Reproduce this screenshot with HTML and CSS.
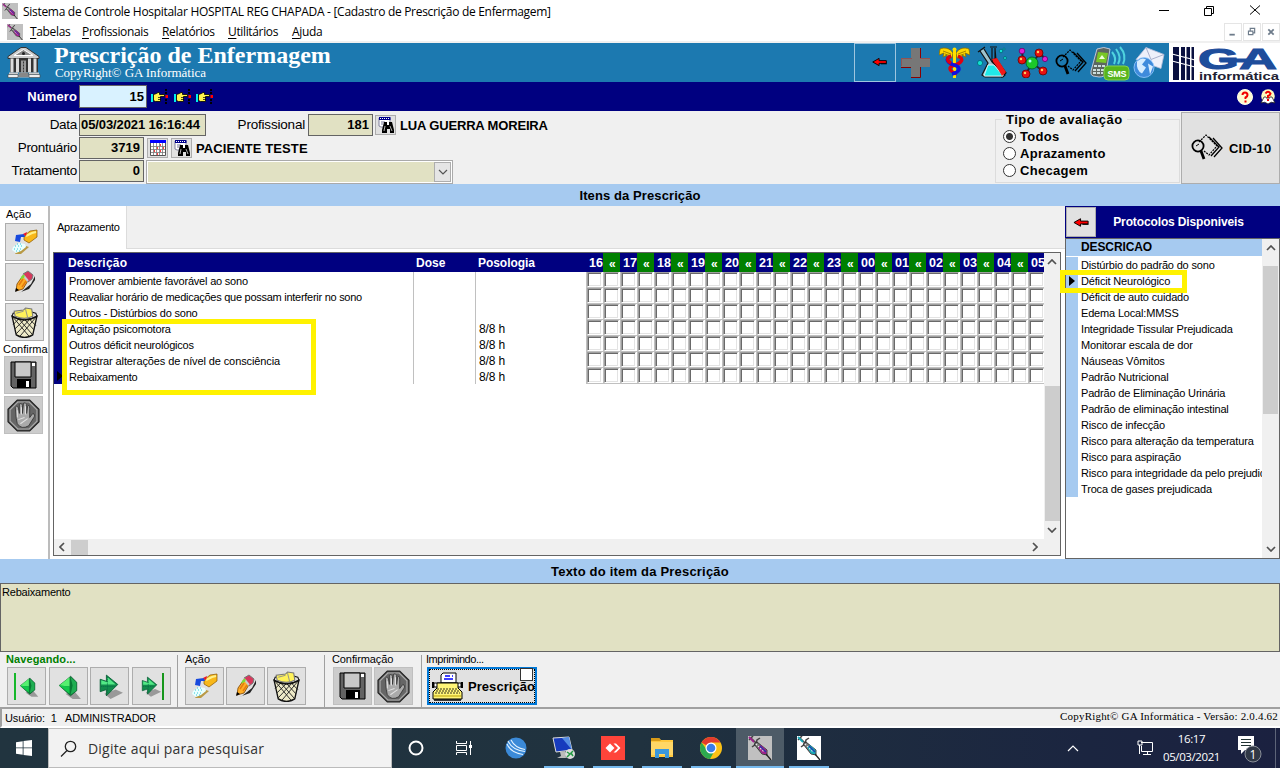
FILE: index.html
```html
<!DOCTYPE html>
<html lang="pt-BR">
<head>
<meta charset="utf-8">
<title>Cadastro de Prescrição de Enfermagem</title>
<link rel="stylesheet" href="styles.css">
</head>
<body>
<svg class="sprite" width="0" height="0">
  <symbol id="syringe" viewBox="0 0 24 24">
    <path d="M1 4L5 0M3 2L9 8M4 11L8 8L9 4L12 2" stroke="#444" stroke-width="1.5" fill="none"/>
    <path d="M1 1L6 6" stroke="currentColor" stroke-width="1.8"/>
    <path d="M6 8L9 6L19 14L19 19L14 18Z" fill="#777" stroke="#222" stroke-width=".8"/>
    <path d="M10 11L13 9L18.500 14L18.500 18.500L14 17.500Z" fill="currentColor"/>
    <path d="M8 8L16 16" stroke="#e8e8e8" stroke-width="1.1" stroke-dasharray="1.500 1.500"/>
    <path d="M12 10L18 16" stroke="#2038b0" stroke-width="1.200"/>
    <path d="M18 18L23 24" stroke="#222" stroke-width="1.300"/>
  </symbol>
  <symbol id="bank" viewBox="0 0 34 33">
    <path d="M1 11L14 2H19L32 11V13H1Z" fill="#ccc" stroke="#333" stroke-width="1"/>
    <path d="M7 10L16.500 4L26 10Z" fill="#888" stroke="#fff"/>
    <circle cx="16.500" cy="8" r="1.500" fill="#222"/>
    <path d="M3 13H31V27H3Z" fill="#333"/>
    <path d="M5 13V27M10.500 13V27M22.500 13V27M28 13V27" stroke="#ddd" stroke-width="3"/>
    <path d="M14 15H19V27H14Z" fill="#999"/><path d="M16.500 16V27" stroke="#333" stroke-dasharray="2 1"/>
    <path d="M2 27H11V29H2ZM22 27H32V29H22Z" fill="#ccc"/>
    <path d="M1 29H11V32H1ZM22 29H33V32H22Z" fill="#eee" stroke="#444" stroke-width=".6"/>
    <path d="M12 27H21L22 32H11Z" fill="#bbb"/><path d="M12 28.500H22M11 30.500H22" stroke="#555"/>
  </symbol>
  <symbol id="arrow-left" viewBox="0 0 18 11">
    <path d="M1 5.500L8 1.500V4H16V7H8V9.500Z" fill="#f00" stroke="#000" stroke-width="1"/>
    <path d="M10 7.500H16.500" stroke="#000"/>
  </symbol>
  <symbol id="cross" viewBox="0 0 31 31">
    <path d="M11 1H20V11H30V20H20V30H11V20H1V11H11Z" fill="#777"/>
    <path d="M20.500 1V11M11 30.500H20.500V20M1 20.500H11" stroke="#8b0000" fill="none"/>
    <path d="M12 11.500H1.500V19M30 11.500H20" stroke="#944" fill="none" stroke-width=".7"/>
  </symbol>
  <symbol id="caduceus" viewBox="0 0 31 32">
    <path d="M14 6C11 1 5 0 1 2L0 8L5 6L4 10L8 8L8 11H13ZM17 6C20 1 26 0 30 2L31 8L26 6L27 10L23 8L23 11H18Z" fill="#ffd800" stroke="#8a6b00" stroke-width=".8"/>
    <path d="M4 4L12 7M6 7L12 9M27 4L19 7M25 7L19 9" stroke="#8a6b00" stroke-width=".8"/>
    <path d="M15.500 2V31" stroke="#ffe000" stroke-width="3"/>
    <path d="M19 9C26 12 22 16 16 18C8 20 10 24 18 27" stroke="#e00010" stroke-width="3.400" fill="none"/>
    <path d="M12 9C5 12 9 16 15 18C23 20 21 25 13 27" stroke="#1010e0" stroke-width="3.400" fill="none"/>
    <path d="M12 9C7 11 8 14 12 16" stroke="#e00010" stroke-width="3.400" fill="none"/>
    <circle cx="15.500" cy="2.500" r="2" fill="#ffe000"/>
  </symbol>
  <symbol id="flasks" viewBox="0 0 31 33">
    <path d="M13 1H20M15 2V14M18 2V12L29 27L25 31L20 28Z" fill="#b9d3dc" stroke="#111" stroke-width="1.200"/>
    <path d="M15 14L19 12L29 27L25 31L20 28Z" fill="#f01818" stroke="#111"/>
    <path d="M1 6L8 1M3 5L11 17L5 29L8 31H26L28 29L15 16L7 3" fill="#9fc3cc" stroke="#111" stroke-width="1.200"/>
    <path d="M11 19H17L26 30H7Z" fill="#20e8e8" stroke="#fff" stroke-width=".7"/>
    <path d="M15 13L20 12L29 26L25 30Z" fill="#f01818"/>
    <g fill="#10e0d0" stroke="#067" stroke-width=".8"><circle cx="3" cy="17" r="2.600"/><circle cx="24" cy="5" r="1.800"/><circle cx="28" cy="12" r="1.500"/><circle cx="27" cy="3" r="1"/></g>
  </symbol>
  <symbol id="molecule" viewBox="0 0 31 30">
    <path d="M5 3L6 12L15 15L23 5L28 11M15 15L9 26M15 15L26 23" fill="none" stroke="#223" stroke-width="2"/>
    <circle cx="15" cy="15" r="6" fill="#1bc82a" stroke="#063"/><circle cx="13" cy="13" r="1.500" fill="#aff"/>
    <g fill="#e81010" stroke="#600" stroke-width=".8"><circle cx="22" cy="5" r="4"/><circle cx="5" cy="12" r="4"/><circle cx="9" cy="26" r="4"/><circle cx="26" cy="23" r="4"/></g>
    <g fill="#e020d0" stroke="#606" stroke-width=".8"><circle cx="5" cy="3" r="2.800"/><circle cx="28" cy="11" r="2.600"/></g>
    <g fill="#ffd060"><circle cx="21" cy="4" r="1.200"/><circle cx="4" cy="11" r="1.200"/><circle cx="8" cy="25" r="1.200"/><circle cx="25" cy="22" r="1.200"/></g>
  </symbol>
  <symbol id="search-docs" viewBox="0 0 32 28">
    <path d="M8 8L15 1L26 12L18 21L13 17" fill="none" stroke="#000" stroke-width="1.200" stroke-dasharray="2 1"/>
    <path d="M18 3L28 13L20 22M22 4L31 14L23 23" fill="none" stroke="#000" stroke-width="1.300"/>
    <circle cx="7" cy="12" r="5.600" fill="none" stroke="#000" stroke-width="1.800"/>
    <path d="M10 17L13 25" stroke="#000" stroke-width="2.800"/><path d="M5 12L8 10" stroke="#000"/>
  </symbol>
  <symbol id="sms" viewBox="0 0 40 36">
    <path d="M7 4Q14 1 20 4L16 28Q15 32 9 32L3 31Q0 30 1 26Z" fill="#5c6661" stroke="#dde" stroke-width=".8"/>
    <path d="M8 7L18 8L16 18L6 17Z" fill="#79c727"/><path d="M9 14L12 10L15 14Z" fill="#efd"/>
    <path d="M4 21H15M3 25H14M3 28H13" stroke="#cdd" stroke-width="1.800" stroke-dasharray="3 1"/>
    <path d="M22 7Q27 13 24 19M26 4Q32 12 28 19M30 2Q37 10 33 19" fill="none" stroke="#4fd3de" stroke-width="2"/>
    <rect x="14" y="21" width="25" height="14" rx="4" fill="#58b51d" stroke="#83d24c"/>
    <text x="17.500" y="32" font-family="Liberation Sans" font-size="9" font-weight="bold" fill="#fff" textLength="19">SMS</text>
  </symbol>
  <symbol id="mail-globe" viewBox="0 0 32 32">
    <path d="M13 1L31 8L28 22L3 13Z" fill="#eef0fa" stroke="#b9bfdc" stroke-width=".8"/>
    <path d="M13 1L18 13L31 8" fill="none" stroke="#aab0cc"/>
    <circle cx="11" cy="21" r="10" fill="#3f8bdc" stroke="#9cf" stroke-width=".8"/>
    <path d="M4 15Q9 10 13 13L9 18L13 21L9 27Q3 24 4 15M15 17L20 20L17 28Z" fill="#d5ecff"/>
  </symbol>
  <symbol id="hand" viewBox="0 0 18 15">
    <path d="M0 5H2V13H0Z" fill="#0ee"/>
    <path d="M2.500 5.500L5.500 4.500L7 3.500H8.500V5.500H13.500V7.500H9.500V12.500H4.500L2.500 11.500Z" fill="#fff34d" stroke="#000" stroke-width=".8"/>
    <path d="M7 8.500H10M7 10.500H10" stroke="#000" stroke-width=".7"/>
    <path d="M14 0H16V2H14ZM14 3H16V5H14ZM14 10H16V12H14ZM14 13H16V15H14Z" fill="#000"/><path d="M14.500 6H17V9H14.500Z" fill="#f00"/>
  </symbol>
  <symbol id="binoculars" viewBox="0 0 16 16">
    <path d="M1 1H12V10H3L1 9Z" fill="#fff" stroke="#668" stroke-width=".8"/><path d="M1 0H12.500V3H1Z" fill="#00008c"/><path d="M2 1.500H12" stroke="#fff" stroke-dasharray="1 1"/>
    <path d="M3 5H7M3 7H5" stroke="#779"/>
    <path d="M6 5H9V8H11V5H14L16 13V16H12V12H9V16H4V13Z" fill="#000"/><path d="M7 9L6 14M12 9L14 14" stroke="#fff" stroke-width=".7"/>
  </symbol>
  <symbol id="calendar" viewBox="0 0 16 16">
    <path d="M.5.5H15.500V15.500H.5Z" fill="#fff" stroke="#555"/><path d="M0 0H16V3H0Z" fill="#00f"/>
    <path d="M3.500 3V15M6.500 3V15M9.500 3V15M12.500 3V15M1 6.500H15M1 9.500H15M1 12.500H15" stroke="#777" stroke-width=".8"/>
    <path d="M7 8H8M10 5H11M13 8H14M4 11H5M10 11H11M7 14H8" stroke="#f00" stroke-width="1.500"/>
  </symbol>
  <symbol id="help" viewBox="0 0 16 16"><circle cx="8" cy="8" r="7.500" fill="#fffbd0" stroke="#ffe" /><path d="M5.500 6Q5.500 3.500 8 3.500T10.500 6Q10.500 7.500 8.500 8.500V10M8.500 11.500V13.500" stroke="#f00000" stroke-width="2" fill="none"/></symbol>
  <symbol id="help-book" viewBox="0 0 16 16"><circle cx="8" cy="7" r="6.800" fill="#fffbc0"/><path d="M1 14L4 8H6L8 11L10 8H12L15 14Q11 12 8 15Q5 12 1 14Z" fill="#fff" stroke="#222" stroke-width=".8"/><path d="M5.500 4.500Q8 1 10.500 4.500Q10 6.500 8 7V9M8 10V12" stroke="#f00000" stroke-width="2" fill="none"/></symbol>
  <symbol id="pour" viewBox="0 0 26 26">
    <path d="M5 22L14 17L17 18L9 25H3Z" fill="#b99a46"/>
    <path d="M12 7L18 2L25 1V8L17 14L12 11Z" fill="#f8b719" stroke="#8a5600" stroke-width=".7"/><path d="M14 7L20 4L24 3" stroke="#fff08a" stroke-width="2" fill="none"/>
    <path d="M3 12L4 6L12 5L13 8L9 8L8 13Z" fill="#1749dd"/><path d="M11 5L15 3L14 7Z" fill="#e12"/>
    <path d="M1 18L7 14L13 15L14 18L9 22L4 24L0 21Z" fill="#e9ffff"/><path d="M3 17H12M2 20H11M5 15H11M4 22H8" stroke="#36c6d6" stroke-dasharray="1 2"/>
  </symbol>
  <symbol id="pencil" viewBox="0 0 22 24">
    <path d="M4 23L15 19L21 10V6L17 14L7 22Z" fill="#222"/>
    <path d="M3 14L10 4L15 9L9 19L2 21Z" fill="#ffae25" stroke="#7b4200" stroke-width=".8"/>
    <path d="M9 4L14 1L19 5L18 9L14 12Z" fill="#d7385c" stroke="#777"/><path d="M9 5L14 11" stroke="#ccc" stroke-width="2"/>
    <path d="M10 5L9 8M7 9L9 6" stroke="#7edb35" stroke-width="2"/><path d="M5 15L9 9M8 17L12 11" stroke="#e67a10" stroke-width="1.500"/><path d="M1 22L2 18L5 20Z" fill="#000"/>
  </symbol>
  <symbol id="trash" viewBox="0 0 26 30">
    <path d="M1 8L5 27Q13 32 21 27L25 8Z" fill="#eeeac8"/>
    <path d="M2 10L18 29M7 11L21 27M13 12L22 22M18 12L24 18M24 10L8 29M19 11L5 26M13 12L4 21M8 11L2 17" stroke="#222" stroke-width=".9"/>
    <path d="M1 9Q13 16 25 9L24 6Q13 2 2 6Z" fill="#ddd" stroke="#111"/>
    <path d="M4 9L3 4L12 3L14 1L20 2L21 9Q13 13 4 9Z" fill="#fff25a" stroke="#777"/><path d="M5 6L12 4M14 2L16 10" stroke="#998" />
    <path d="M1 9Q13 16 25 9L21 27Q13 32 5 27Z" fill="none" stroke="#111" stroke-width="1.300"/>
  </symbol>
  <symbol id="floppy" viewBox="0 0 27 28">
    <path d="M1 1H26V27H3L1 25Z" fill="#636363" stroke="#000"/><path d="M5 1H21V16H5Z" fill="#c8c8c8" stroke="#000"/><path d="M22 2H25V5H22Z" fill="#fff"/><path d="M7 18H21V27H7Z" fill="#000"/><path d="M16 20H19V26H16Z" fill="#fff"/>
  </symbol>
  <symbol id="stop" viewBox="0 0 32 32">
    <path d="M10 1H22L31 10V22L22 31H10L1 22V10Z" fill="#666" stroke="#222" stroke-width="1.200"/><path d="M10.500 3H21.500L29 10.500V21.500L21.500 29H10.500L3 21.500V10.500Z" fill="none" stroke="#aaa" stroke-width="1"/>
    <path d="M9 19L8 8Q9 6 11 8L12 14L12 5Q14 3 15 6V14L16 4Q18 3 19 5V14L20 7Q22 5 22 9V18L25 14Q28 15 26 18L21 26Q14 30 10 24Z" fill="#aaa" stroke="#333" stroke-width=".8"/>
    <path d="M11 20L17 18M13 24L20 19M10 11V18M14 8V15M18 7V15" stroke="#e2e2e2" stroke-width="1"/>
  </symbol>
  <symbol id="nav-prev" viewBox="0 0 28 26">
    <path d="M11 20L18 25H26L20 18Z" fill="#999"/><path d="M5 12L14 5L16 3L22 9V17L16 22Z" fill="#087a35" stroke="#034d24" stroke-width=".6"/><path d="M5 12L15 4V13Z" fill="#55f070"/><path d="M5 12L15 13V20Z" fill="#12c84b"/><path d="M16 4L21.500 9V17L16 21L18 12Z" fill="#1fae52"/>
  </symbol>
  <symbol id="nav-next" viewBox="0 0 28 26">
    <path d="M9 20L15 25L27 19L20 16Z" fill="#999"/><path d="M5 6L11 8V2L22 11L11 22V16L5 18Z" fill="#128b4c" stroke="#045d32" stroke-width=".8"/><path d="M6 7L12 9V4L20 11H6Z" fill="#52e986"/><path d="M6 13H19M12 4V19" stroke="#057047" fill="none" stroke-width="1" stroke-dasharray="1 1"/>
  </symbol>
  <symbol id="typewriter" viewBox="0 0 33 29">
    <path d="M10 11V3L12 1H25V11Z" fill="#fff" stroke="#000"/><path d="M14 4H19M13 7H22M21 4H22" stroke="#00f" stroke-width="1.300"/>
    <path d="M3 11H30V15H3Z" fill="#fff" stroke="#000"/><path d="M2 10V16M31 10V16" stroke="#000" stroke-width="2"/>
    <path d="M6 11H27V16L31 20V27H2V20L6 16Z" fill="#fff477" stroke="#000"/><path d="M6 17H27M5 19H28M4 21H29" stroke="#000" stroke-width=".8" stroke-dasharray="2 1"/><path d="M3 24H30" stroke="#b79e00"/><path d="M3 28H30" stroke="#000" stroke-width="1.500"/>
  </symbol>
</svg>

<div class="app">
  <header class="titlebar">
    <svg class="app-icon pink"><use href="#syringe"/></svg>
    <span class="window-title">Sistema de Controle Hospitalar HOSPITAL REG CHAPADA - [Cadastro de Prescrição de Enfermagem]</span>
    <svg class="window-controls" viewBox="0 0 110 22"><path d="M0 10.500H10M45.500 8.500H52.500V15.500H45.500ZM47.500 8V6.500H54.500V13.500H53M91 5.500L101 14.500M101 5.500L91 14.500" fill="none" stroke="#000"/></svg>
  </header>
  <nav class="menubar">
    <svg class="app-icon pink"><use href="#syringe"/></svg>
    <span class="m1"><u>T</u>abelas</span><span class="m2"><u>P</u>rofissionais</span><span class="m3"><u>R</u>elatórios</span><span class="m4"><u>U</u>tilitários</span><span class="m5"><u>A</u>juda</span>
    <div class="mdi">
      <svg viewBox="0 0 18 18"><path d="M5 12H11" stroke="#6d7b8a" stroke-width="2"/></svg>
      <svg viewBox="0 0 18 18"><path d="M5 8H10V12H5ZM7 8V5H12V10H10" stroke="#6d7b8a" fill="none" stroke-width="1.300"/></svg>
      <svg viewBox="0 0 18 18"><path d="M6 6L12 12M12 6L6 12" stroke="#6d7b8a" stroke-width="2"/></svg>
    </div>
  </nav>
  <section class="banner">
    <svg class="bank"><use href="#bank"/></svg>
    <div class="brand"><h1>Prescrição de Enfermagem</h1><p>CopyRight© GA Informática</p></div>
    <div class="modules">
      <div class="back"><svg width="18" height="10"><use href="#arrow-left"/></svg></div>
      <svg class="i-cross"><use href="#cross"/></svg><svg class="i-cad"><use href="#caduceus"/></svg><svg class="i-flask"><use href="#flasks"/></svg><svg class="i-mol"><use href="#molecule"/></svg><svg class="i-docs"><use href="#search-docs"/></svg><svg class="i-sms"><use href="#sms"/></svg><svg class="i-mail"><use href="#mail-globe"/></svg>
    </div>
    <svg class="logo" viewBox="0 0 111 39">
      <rect width="111" height="39" fill="#fff"/>
      <path d="M4 4H10V37H4ZM12 4H16V37H12ZM17.500 4H21V37H17.500ZM22.500 4H25V37H22.500Z" fill="#0a1040"/><path d="M3 11L26 17M3 18L26 24" stroke="#fff" stroke-width="1.200"/>
      <text x="29" y="26" class="logo-ga" textLength="79" lengthAdjust="spacingAndGlyphs">GA</text><path d="M53 15.500H84L81 19.500H51Z" fill="#1e4d9b"/>
      <text x="30" y="37" class="logo-info" textLength="80" lengthAdjust="spacingAndGlyphs">informática</text>
    </svg>
  </section>
  <section class="number-bar">
    <label>Número</label><div class="number">15</div>
    <svg class="hand"><use href="#hand"/></svg><svg class="hand"><use href="#hand"/></svg><svg class="hand"><use href="#hand"/></svg>
    <div class="helps"><svg><use href="#help"/></svg><svg><use href="#help-book"/></svg></div>
  </section>

  <section class="form">
    <div class="fields">
      <div class="row"><label>Data</label><div class="field date">05/03/2021 16:16:44</div><label class="prof">Profissional</label><div class="field num">181</div><div class="mini first"><svg><use href="#binoculars"/></svg></div><b class="who">LUA GUERRA MOREIRA</b></div>
      <div class="row"><label>Prontuário</label><div class="field num">3719</div><div class="mini cal"><svg><use href="#calendar"/></svg></div><div class="mini"><svg><use href="#binoculars"/></svg></div><b class="patient">PACIENTE TESTE</b></div>
      <div class="row"><label>Tratamento</label><div class="field num">0</div><div class="combo"><div class="drop"><svg viewBox="0 0 10 6"><path d="M1 1L5 5L9 1" fill="none" stroke="#555" stroke-width="1.200"/></svg></div></div></div>
    </div>
    <fieldset><legend>Tipo de avaliação</legend>
      <div><i class="radio on"></i>Todos</div><div><i class="radio"></i>Aprazamento</div><div><i class="radio"></i>Checagem</div>
    </fieldset>
    <div class="cid"><svg><use href="#search-docs"/></svg><b>CID-10</b></div>
  </section>
  <div class="strip">Itens da Prescrição</div>

  <main>
    <aside>
      <span class="side-label">Ação</span>
      <div class="btn"><svg class="pour"><use href="#pour"/></svg></div><div class="btn"><svg class="pencil"><use href="#pencil"/></svg></div><div class="btn"><svg class="trash"><use href="#trash"/></svg></div>
      <span class="side-label conf">Confirma</span>
      <div class="btn off"><svg class="floppy"><use href="#floppy"/></svg></div><div class="btn off"><svg class="stop"><use href="#stop"/></svg></div>
    </aside>
    <section class="sheet">
      <div class="tabs"><div class="tab">Aprazamento</div></div>
      <div class="grid-wrap">
        <div class="grid">
          <div class="thead"><span class="h-ind"></span><span class="h-desc">Descrição</span><span class="h-dose">Dose</span><span class="h-pos">Posologia</span><div class="hours" id="hours"></div></div>
          <div id="rows"></div>
        </div>
        <div class="vbar"><svg viewBox="0 0 10 6"><path d="M1 5L5 1L9 5"/></svg><i class="vthumb"></i><svg class="down" viewBox="0 0 10 6"><path d="M1 1L5 5L9 1"/></svg></div>
        <div class="hbar"><svg viewBox="0 0 6 10"><path d="M5 1L1 5L5 9"/></svg><i></i><svg class="right" viewBox="0 0 6 10"><path d="M1 1L5 5L1 9"/></svg></div>
        <div class="mark rows-mark"></div>
      </div>
    </section>
    <section class="protocols">
      <header><div class="pback"><svg width="17" height="11"><use href="#arrow-left"/></svg></div><b>Protocolos Disponiveis</b></header>
      <div class="plist">
        <div class="pcontent"><div class="phead">DESCRICAO</div><ul id="protocols"></ul></div>
        <div class="pbar"><svg viewBox="0 0 10 6"><path d="M1 5L5 1L9 5"/></svg><i></i><svg class="down" viewBox="0 0 10 6"><path d="M1 1L5 5L9 1"/></svg></div>
      </div>
      <div class="mark protocol-mark"></div>
    </section>
  </main>
  <div class="strip second">Texto do item da Prescrição</div>
  <div class="memo">Rebaixamento</div>

  <section class="toolbar">
    <div class="group g-nav"><span class="green">Navegando...</span><div class="buttons">
      <div class="btn"><svg class="nav first-nav"><use href="#nav-prev"/></svg></div><div class="btn"><svg class="nav"><use href="#nav-prev"/></svg></div><div class="btn"><svg class="nav"><use href="#nav-next"/></svg></div><div class="btn"><svg class="nav last-nav"><use href="#nav-next"/></svg></div></div></div>
    <div class="group g-act"><span>Ação</span><div class="buttons"><div class="btn"><svg class="pour"><use href="#pour"/></svg></div><div class="btn"><svg class="pencil"><use href="#pencil"/></svg></div><div class="btn"><svg class="trash"><use href="#trash"/></svg></div></div></div>
    <div class="group g-conf"><span>Confirmação</span><div class="buttons"><div class="btn off"><svg class="floppy"><use href="#floppy"/></svg></div><div class="btn off"><svg class="stop"><use href="#stop"/></svg></div></div></div>
    <div class="group g-print"><span>Imprimindo...</span><div class="print"><svg><use href="#typewriter"/></svg><b>Prescrição</b><i></i></div></div>
  </section>
  <footer class="status"><span class="user">Usuário:&nbsp; 1 &nbsp; ADMINISTRADOR</span><span class="version">CopyRight© GA Informática - Versão: 2.0.4.62</span></footer>

  <footer class="taskbar">
    <div class="start"><svg viewBox="0 0 16 16"><path d="M0 2.200L6.700 1.200V7.500H0ZM7.500 1.100L16 0V7.500H7.500ZM0 8.300H6.700V14.700L0 13.800ZM7.500 8.300H16V16L7.500 14.900Z" fill="#fff"/></svg></div>
    <div class="search"><svg viewBox="0 0 17 17"><circle cx="10.500" cy="6.500" r="5.200" fill="none" stroke="#222" stroke-width="1.300"/><path d="M7 10.500L1 16.500" stroke="#222" stroke-width="1.300"/></svg>Digite aqui para pesquisar</div>
    <div class="task plain"><svg width="18" height="18"><circle cx="9" cy="9" r="6.500" fill="none" stroke="#fff" stroke-width="2"/></svg></div>
    <div class="task plain"><svg width="18" height="16"><path d="M1.500 1V3.500H11.500V1M1.500 15V12.500H11.500V15M1.500 5.500H11.500V10.500H1.500ZM15.500 1V15" fill="none" stroke="#fff"/><path d="M14 5H17V8H14Z" fill="#fff"/></svg></div>
    <div class="task wide"><svg width="22" height="22"><circle cx="11" cy="11" r="10.500" fill="#3b8ad8"/><path d="M3 4Q7 13 20 14.500M6 3Q10 11 20 12.500M2 7Q6 16 18 17.500" stroke="#e4f3ff" stroke-width="1.100" fill="none"/></svg></div>
    <div class="task run"><svg width="24" height="24"><path d="M1 2L17 1L20 14L4 16Z" fill="#173bbd" stroke="#ddd"/><path d="M10 2L17 1L20 14Z" fill="#548de3"/><path d="M8 16L9 20L5 22H14L13 15" fill="#bbb"/><circle cx="18" cy="18" r="5" fill="#ddd"/><path d="M15 16L18 18L15 21M21 15L19 17L21 20" stroke="#219a42" fill="none" stroke-width="1.500"/></svg></div>
    <div class="task run"><svg width="24" height="24"><path d="M0 0H24V24H0Z" fill="#ff443a"/><path d="M9 7.500L13.500 12L9 16.500L4.500 12Z" fill="#fff"/><path d="M12.500 7.500L17 12L12.500 16.500L15 16.500L19.500 12L15 7.500Z" fill="#fff"/></svg></div>
    <div class="task run"><svg width="22" height="22"><path d="M0 1H8L10 3H22V20H0Z" fill="#ffc83d"/><path d="M0 1H8L10 4H0Z" fill="#d89b18"/><path d="M0 5H22V18H0Z" fill="#ffd766"/><path d="M4 21V12H18V21H14V17H8V21Z" fill="#3b98dc"/></svg></div>
    <div class="task run"><svg width="24" height="24" viewBox="0 0 24 24"><circle cx="12" cy="12" r="11" fill="#fbc116"/><path d="M12 12L2.500 6.500A11 11 0 0 1 21.500 6.500H12Z" fill="#e33b2e"/><path d="M2.500 6.500A11 11 0 0 0 11 23L16 14H8Z" fill="#2da94f"/><circle cx="12" cy="12" r="5.500" fill="#fff"/><circle cx="12" cy="12" r="4.300" fill="#3b7de9"/></svg></div>
    <div class="task active"><svg class="tsyr pink"><use href="#syringe"/></svg></div>
    <div class="task run tlast"><svg class="tsyr blue"><use href="#syringe"/></svg></div>
    <div class="tray"><svg class="caret" viewBox="0 0 12 8"><path d="M1 7L6 2L11 7" fill="none" stroke="#fff" stroke-width="1.200"/></svg>
      <svg class="net" viewBox="0 0 17 16"><path d="M4 2.500H15.500V11.500H4.500V6M10.500 11V14.500M6 14.500H14M1 1H5V5H1ZM2.500 5V14" fill="none" stroke="#fff"/></svg>
      <div class="clock"><span>16:17</span><span>05/03/2021</span></div>
      <svg class="note" viewBox="0 0 25 28"><path d="M1 1H17V15H8L4 19V15H1Z" fill="#fff"/><path d="M4 4.500H14M4 7.500H14M4 10.500H14" stroke="#233"/><circle cx="16" cy="19" r="8" fill="#303846" stroke="#8a8f98"/><text x="16" y="23.500" text-anchor="middle" font-family="Open Sans" font-size="12" fill="#fff">1</text></svg>
      <i class="desktop"></i></div>
  </footer>
</div>
<script src="grid.js"></script>
</body>
</html>
```

FILE: grid.js
```js
const items = [
  ['Promover ambiente favorável ao sono', ''],
  ['Reavaliar horário de medicações que possam interferir no sono', ''],
  ['Outros - Distúrbios do sono', ''],
  ['Agitação psicomotora', '8/8 h'],
  ['Outros déficit neurológicos', '8/8 h'],
  ['Registrar alterações de nível de consciência', '8/8 h'],
  ['Rebaixamento', '8/8 h']
];
const protocols = ['Distúrbio do padrão do sono', 'Déficit Neurológico', 'Déficit de auto cuidado',
  'Edema Local:MMSS', 'Integridade Tissular Prejudicada', 'Monitorar escala de dor', 'Náuseas Vômitos',
  'Padrão Nutricional', 'Padrão de Eliminação Urinária', 'Padrão de eliminação intestinal',
  'Risco de infecção', 'Risco para alteração da temperatura', 'Risco para aspiração',
  'Risco para integridade da pelo prejudicada', 'Troca de gases prejudicada'];

const columns = [];
for (let i = 0; i < 14; i++) {
  columns.push(String((16 + i) % 24).padStart(2, '0'));
  if (i < 13) columns.push('«');
}
document.getElementById('hours').innerHTML = columns
  .map(c => `<span class="${c === '«' ? 'next' : 'hour'}">${c}</span>`).join('');

document.getElementById('rows').innerHTML = items.map(([text, dosage], i) => `
  <div class="trow"><span class="ind">${i === items.length - 1 ? '<i class="pointer"></i>' : ''}</span>
  <span class="desc">${text}</span><span class="dose"></span><span class="pos">${dosage}</span>
  <div class="checks">${columns.map(() => '<i><b></b></i>').join('')}</div></div>`).join('');

document.getElementById('protocols').innerHTML = protocols
  .map((p, i) => `<li><span class="pind">${i === 1 ? '<i class="pointer"></i>' : ''}</span><span>${p}</span></li>`).join('');
```

FILE: styles.css
```css
* { box-sizing: border-box; }
body { margin: 0; width: 1280px; height: 768px; overflow: hidden; font-family: "Liberation Sans", Arial, sans-serif; font-size: 11px; color: #000; }
svg { display: block; flex: none; }
.sprite { position: absolute; }
.app { display: flex; flex-direction: column; width: 1280px; height: 768px; background: #f0f0f0; }
.app > * { flex: none; }
.app-icon { width: 16px; height: 16px; background: #c0c0c0; }
.pink { color: #a0208c; }
.blue { color: #16a8b8; }

.titlebar, .menubar { display: flex; align-items: center; background: #fff; font-family: "Open Sans", sans-serif; font-size: 12px; white-space: nowrap; }
.titlebar { height: 22px; padding-left: 2px; }
.window-title { margin-left: 5px; width: 1134px; letter-spacing: -.3px; }
.window-controls { width: 110px; height: 22px; margin-left: 2px; }
.menubar { height: 21px; padding-left: 7px; border-bottom: 2px solid #f0f0f0; letter-spacing: -.35px; }
.menubar u { text-underline-offset: 2px; }
.m1 { margin-left: 7px; width: 52px; }
.m2 { width: 80px; }
.m3 { width: 66px; }
.m4 { width: 64px; }
.mdi { display: flex; gap: 1px; margin-left: auto; }
.mdi svg { width: 18px; height: 18px; border: 1px solid #e5e5e5; }

.banner { display: flex; height: 39px; background: #1c79b0; color: #fff; }
.bank { width: 34px; height: 34px; margin: 2px 0 0 7px; }
.brand { width: 400px; margin-left: 13px; font-family: "Liberation Serif", serif; }
.brand h1 { margin: 0; font-size: 24px; line-height: 24px; letter-spacing: 0; white-space: nowrap; }
.brand p { margin: 0 0 0 1px; font-size: 13px; line-height: 12px; letter-spacing: -.05px; }
.modules { display: flex; align-items: center; margin-left: auto; width: 315px; }
.back { width: 42px; height: 39px; border: 1px solid #9ec6df; display: flex; align-items: center; justify-content: center; padding: 0 0 2px 9px; }
.i-cross { width: 31px; height: 31px; margin-left: 4px; }
.i-cad { width: 31px; height: 32px; margin-left: 8px; }
.i-flask { width: 31px; height: 33px; margin-left: 7px; }
.i-mol { width: 31px; height: 30px; margin-left: 9px; }
.i-docs { width: 32px; height: 28px; margin-left: 7px; }
.i-sms { width: 40px; height: 36px; margin-left: 3px; }
.i-mail { width: 32px; height: 33px; margin-left: 3px; }
.logo { width: 111px; height: 39px; }
.logo-ga { font: bold 30px "Liberation Sans", sans-serif; fill: #1e4d9b; stroke: #1e4d9b; stroke-width: 1px; }
.logo-info { font: bold 10.5px "Liberation Sans", sans-serif; fill: #223; }

.number-bar { display: flex; align-items: center; height: 29px; background: #000080; }
.number-bar label { width: 79px; padding-right: 2px; text-align: right; font-size: 13px; font-weight: bold; color: #fff; letter-spacing: .1px; }
.number { width: 68px; height: 23px; border: 1px solid #646464; background: #d9f2ff; padding-right: 2px; text-align: right; font-size: 13px; font-weight: bold; line-height: 21px; }
.hand { width: 18px; height: 15px; margin-left: 4px; }
.hand + .hand { margin-left: 4.500px; }
.helps { display: flex; gap: 7px; margin: 0 4px 0 auto; }
.helps svg { width: 16px; height: 16px; }

.form { display: flex; height: 73px; font-size: 13px; }
.fields { display: flex; flex-direction: column; gap: 1px; padding-top: 3px; width: 995px; }
.row { display: flex; height: 22px; }
.row label { width: 79px; padding-right: 2px; line-height: 22px; text-align: right; font-size: 13.5px; letter-spacing: -.3px; white-space: nowrap; }
.row .prof { width: 102px; padding-right: 3px; letter-spacing: -.2px; }
.field { height: 22px; border: 1px solid #646464; background: #e1e1c3; font-weight: bold; line-height: 20px; }
.date { width: 127px; padding-left: 1px; letter-spacing: -.1px; }
.num { width: 65px; padding-right: 3px; text-align: right; }
.mini { width: 21px; height: 20px; margin: 1px 0 0 3px; border: 1px solid #adadad; background: #e1e1e1; padding: 1px 2px; }
.mini.first { margin-left: 2px; }
.mini svg { width: 16px; height: 16px; }
.who { margin-left: 4px; line-height: 23px; letter-spacing: -.16px; }
.patient { margin-left: 4px; line-height: 23px; letter-spacing: .1px; }
.combo { width: 307px; height: 24px; margin-left: 2px; border: 1px solid #aaa; background: #e1e1c3; padding: 1px; outline: 1px solid #fff; outline-offset: -2px; }
.drop { display: flex; align-items: center; justify-content: center; width: 17px; height: 20px; margin-left: auto; border: 1px solid #adadad; background: #e5e5e5; }
.drop svg { width: 10px; height: 6px; }
fieldset { width: 185px; height: 72px; margin: 0 1px 0 0; padding: 0 0 0 7px; border: 1px solid #dcdcdc; font-weight: bold; letter-spacing: .5px; }
fieldset legend { height: 17px; padding: 0 4px; margin-left: -1px; line-height: 17px; }
fieldset div { display: flex; align-items: center; height: 17px; letter-spacing: .3px; }
.radio { width: 13px; height: 13px; margin-right: 4px; border: 1px solid #333; border-radius: 50%; background: #fff; }
.radio.on { background: radial-gradient(circle, #333 3px, #fff 4px); }
.cid { display: flex; align-items: center; width: 99px; height: 72px; margin-top: 1px; border: 1px solid #adadad; background: #e1e1e1; padding-left: 9px; }
.cid svg { width: 32px; height: 28px; }
.cid b { margin-left: 6px; letter-spacing: .2px; }
.strip { height: 22px; background: #a6caf0; text-align: center; font-size: 13px; font-weight: bold; line-height: 23px; letter-spacing: .1px; }
.strip.second { height: 24px; line-height: 25px; letter-spacing: .2px; }

main { display: flex; height: 353px; }
aside { width: 50px; background: #fff; border-right: 2px solid #bcbcbc; padding-left: 5px; }
.side-label { display: block; height: 17px; line-height: 16px; padding-left: 1px; font-size: 11px; }
.conf { height: 13px; margin-left: -3px; line-height: 12px; }
.btn { display: flex; align-items: center; justify-content: center; width: 39px; height: 38px; border: 1px solid #adadad; background: #e1e1e1; }
aside .btn { margin-bottom: 2px; }
.btn.off { background: #ccc; border-color: #bfbfbf; }
aside .off { margin-left: -1px; }
.pour { width: 26px; height: 26px; }
.pencil { width: 22px; height: 24px; }
.trash { width: 27px; height: 31px; }
.floppy { width: 27px; height: 28px; }
.stop { width: 33px; height: 33px; }
.sheet { width: 1015px; background: #fff; }
.tabs { height: 43px; border-bottom: 1px solid #dcdcdc; background: #f0f0f0; }
.tab { width: 77px; height: 43px; background: #fff; border-right: 1px solid #dcdcdc; padding-left: 7px; line-height: 42px; letter-spacing: -.25px; }
.grid-wrap { position: relative; display: grid; grid-template: 286px 16px / 990px 16px; width: 1008px; height: 304px; margin: 3px 0 0 3px; border: 1px solid #646464; background: #fff; }
.grid { overflow: hidden; }
.thead, .trow { display: flex; width: 992px; }
.thead { height: 19px; background: #000080; color: #fff; font-size: 12px; font-weight: bold; line-height: 20px; }
.h-ind, .ind { width: 12px; background: #000080; }
.h-desc { width: 348px; padding-left: 2px; letter-spacing: .2px; }
.h-dose { width: 62px; padding-left: 2px; }
.h-pos { width: 110px; padding-left: 2px; letter-spacing: -.05px; }
.hours { display: flex; }
.hours span { flex: none; width: 17px; height: 19px; padding-left: 3px; font-size: 12.5px; }
.hours .next { background: #008000; padding-left: 6px; line-height: 22px; font-size: 12px; }
.trow { height: 16px; line-height: 18px; }
.trow span { flex: none; white-space: nowrap; }
.ind { display: flex; align-items: center; padding-left: 3px; }
.pointer { border-left: 6px solid #000; border-top: 5px solid transparent; border-bottom: 5px solid transparent; }
.desc { width: 348px; padding-left: 3px; border-right: 1px solid #c0c0c0; letter-spacing: -.2px; }
.trow:nth-child(6) .desc { letter-spacing: -.11px; }
.trow:nth-child(2) .desc { letter-spacing: -.27px; }
.dose { width: 62px; border-right: 1px solid #c0c0c0; }
.pos { width: 110px; padding-left: 3px; font-size: 12px; letter-spacing: -.1px; }
.checks { display: flex; }
.checks i { flex: none; width: 17px; height: 16px; border-left: 1px solid #c0c0c0; border-bottom: 1px solid #c0c0c0; }
.checks b { display: block; width: 15px; height: 15px; border: 1px solid; border-color: #a0a0a0 #fff #fff #a0a0a0; box-shadow: inset 1px 1px #696969, inset -1px -1px #e3e3e3; }
.vbar, .pbar { display: flex; flex-direction: column; align-items: center; background: #f0f0f0; }
.vbar svg, .pbar svg { width: 10px; height: 6px; margin-top: 6px; fill: none; stroke: #505050; stroke-width: 1.7; }
.vbar i { width: 15px; height: 135px; margin-top: 121px; background: #cdcdcd; }
.vbar .down { margin-top: 6px; }
.hbar { grid-column: 1 / 3; display: flex; align-items: center; background: #f0f0f0; }
.hbar svg { width: 6px; height: 10px; margin-left: 5px; fill: none; stroke: #505050; stroke-width: 1.7; }
.hbar i { width: 17px; height: 15px; margin-left: 6px; background: #cdcdcd; }
.hbar .right { margin: 0 22px 0 auto; }
.mark { position: absolute; border: 5px solid #fff200; }
.rows-mark { left: 8px; top: 66px; width: 254px; height: 76px; }

.protocols { position: relative; width: 215px; }
.protocols header { display: flex; height: 32px; background: #000080; color: #fff; font-size: 12px; }
.pback { display: flex; align-items: center; justify-content: center; width: 30px; height: 30px; margin: 1px 0 0 1px; background: #e1e1e1; border: 1px solid #adadad; }
.protocols header b { flex: 1; text-align: center; padding-right: 19px; line-height: 32px; letter-spacing: -.13px; }
.plist { display: flex; height: 321px; border: 1px solid #646464; background: #fff; }
.pcontent { width: 196px; overflow: hidden; }
.phead { height: 17px; margin-bottom: 1px; padding-left: 15px; background: #a6caf0; font-size: 12px; font-weight: bold; line-height: 17px; letter-spacing: -.1px; }
.plist ul { margin: 0; padding: 0; list-style: none; }
.plist li { display: flex; height: 16px; line-height: 17px; white-space: nowrap; letter-spacing: -.17px; }
.plist li span + span { padding-left: 3px; }
.pind { display: flex; align-items: center; flex: none; width: 12px; padding-left: 3px; background: #a6caf0; }
.pbar { width: 17px; }
.pbar i { width: 15px; height: 148px; margin-top: 15px; background: #cdcdcd; }
.pbar .down { margin-top: auto; margin-bottom: 6px; }
.protocol-mark { left: -5px; top: 64px; width: 127px; height: 23px; }

.memo { height: 69px; padding: 1px; border: 1px solid #646464; background: #e1e1c3; line-height: 15px; letter-spacing: -.2px; }
.toolbar { display: flex; height: 55px; }
.group { padding-top: 0; font-size: 11px; }
.group > span { display: block; height: 15px; line-height: 15px; white-space: nowrap; }
.g-nav { width: 178px; padding-left: 7px; }
.g-nav .buttons { gap: 2.670px; }
.g-nav > span { margin-left: -1px; }
.g-act { width: 148px; padding-left: 7px; }
.g-conf { width: 98px; padding-left: 8px; }
.g-print { padding-left: 4px; }
.g-act, .g-conf, .g-print { border-left: 1px solid #a0a0a0; margin-top: 3px; padding-top: 0; margin-left: -1px; }
.g-act > span, .g-conf > span, .g-print > span { height: 12px; line-height: 9px; }
.g-conf > span { margin-left: -1px; letter-spacing: -.1px; }
.g-print > span { letter-spacing: -.45px; }
.green { color: #008000; font-weight: bold; letter-spacing: .1px; }
.buttons { display: flex; gap: 2px; }
.nav { width: 29px; height: 27px; }
.first-nav { border-left: 2px solid #16b82b; width: 26px; }
.last-nav { border-right: 2px solid #16961b; width: 26px; }
.print { position: relative; display: flex; align-items: center; width: 110px; height: 38px; margin-left: 1px; border: 2px solid #0078d7; background: #e1e1e1; outline: 1px dotted #000; outline-offset: -3px; font-size: 13px; padding-left: 2px; }
.print svg { width: 33px; height: 29px; }
.print b { margin-left: 4px; letter-spacing: .05px; }
.print i { position: absolute; right: 2px; top: -1px; width: 13px; height: 13px; border: 1px solid #333; background: #fff; }
.status { display: flex; justify-content: space-between; height: 21px; border-top: 2px solid #a0a0a0; border-left: 2px solid #a0a0a0; border-bottom: 2px solid #fff; padding: 0 2px 0 3px; line-height: 19px; }
.user { letter-spacing: -.12px; }
.version { font-family: "Liberation Serif", serif; font-size: 11px; line-height: 14px; letter-spacing: .2px; }

.taskbar { display: flex; height: 40px; background: linear-gradient(90deg, #21343f, #20323f 50%, #1b2540 85%, #1b2140); color: #fff; font-family: "Open Sans", sans-serif; }
.start { display: flex; align-items: center; justify-content: center; width: 48px; }
.start svg { width: 16px; height: 16px; }
.search { display: flex; align-items: center; width: 344px; border: 1px solid #bbb; background: #f2f2f2; color: #333; padding-left: 11px; font-size: 14px; letter-spacing: .2px; }
.search svg { width: 17px; height: 17px; margin-right: 11px; }
.task { display: flex; align-items: center; justify-content: center; flex: none; }
.plain { width: 48px; }
.wide { width: 56px; }
.run { width: 40px; height: 40px; margin-right: 9px; border-bottom: 2px solid #76b9ed; padding-top: 2px; }
.active { width: 48px; margin: 0 5px 0 -4px; background: #4d5b67; border-bottom: 2px solid #76b9ed; padding-top: 2px; }
.tsyr { width: 24px; height: 24px; background: #c0c0c0; }
.tsyr.blue { background: #fff; }
.tray { display: flex; align-items: center; margin-left: auto; width: 213px; height: 40px; }
.caret { width: 12px; height: 8px; }
.net { width: 17px; height: 16px; margin-left: 58px; }
.clock { display: flex; flex-direction: column; align-items: center; width: 59px; margin-left: 8px; font-size: 11.5px; line-height: 18px; letter-spacing: -.4px; }
.note { width: 25px; height: 28px; margin: 2px 0 0 16px; }
.desktop { width: 1px; height: 40px; margin-left: 13px; background: #5d6478; }
```
